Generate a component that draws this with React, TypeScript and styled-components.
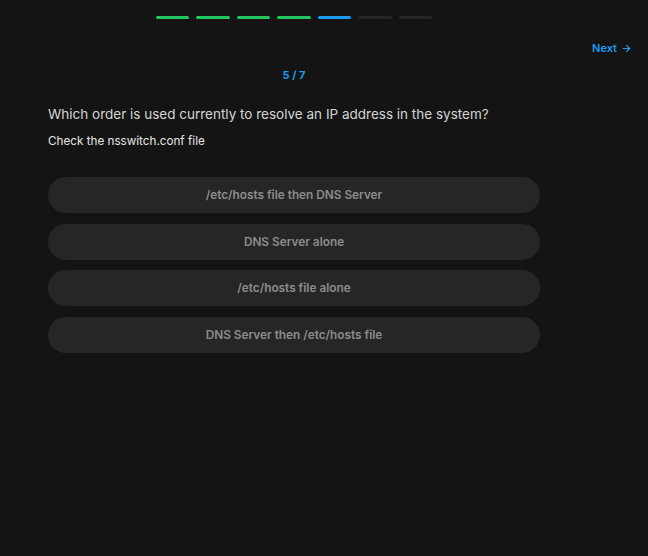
import React from "react";
import styled, { createGlobalStyle } from "styled-components";

const Global = createGlobalStyle`
  html, body { margin: 0; padding: 0; background: #141414; }
  body { font-family: Inter, "Noto Sans", sans-serif; }
  * { box-sizing: border-box; }
`;

const Page = styled.div`
  width: 648px;
  height: 556px;
  background: #141414;
  display: flex;
  flex-direction: column;
`;

const Column = styled.div`
  width: 492px;
  margin-left: 48px;
  display: flex;
  flex-direction: column;
`;

const Progress = styled.div`
  display: flex;
  justify-content: center;
  gap: 7px;
  padding-top: 16px;
  height: 19px;
`;

const Segment = styled.div<{ $state: "done" | "current" | "todo" }>`
  width: 33.5px;
  height: 3px;
  border-radius: 2px;
  background: ${(p) =>
    p.$state === "done" ? "#22c55e" : p.$state === "current" ? "#1d9bf0" : "#262626"};
`;

const TopBar = styled.div`
  display: flex;
  justify-content: flex-end;
  padding: 22px 16px 0 0;
`;

const NextButton = styled.button`
  display: flex;
  align-items: center;
  gap: 4px;
  background: none;
  border: none;
  padding: 0;
  color: #1d9bf0;
  font-family: Inter, sans-serif;
  font-weight: 600;
  font-size: 11px;
  line-height: 14px;
  cursor: pointer;
`;

const Counter = styled.div`
  text-align: center;
  color: #1d9bf0;
  font-weight: 700;
  font-size: 11px;
  line-height: 14px;
  margin-top: 13px;
`;

const Question = styled.h1`
  margin: 22px 0 0;
  color: #d4d4d4;
  font-size: 13.5px;
  font-weight: 400;
  line-height: 20px;
  white-space: nowrap;
`;

const Hint = styled.p`
  margin: 9px 0 0;
  color: #e5e5e5;
  font-size: 11.7px;
  line-height: 16px;
`;

const Options = styled.div`
  margin-top: 28px;
  display: flex;
  flex-direction: column;
  gap: 10.5px;
`;

const Option = styled.button`
  height: 36px;
  border: none;
  border-radius: 18px;
  background: #262626;
  color: #8c8c8c;
  font-family: Inter, sans-serif;
  font-weight: 600;
  font-size: 11.8px;
  cursor: pointer;
`;

const steps: ("done" | "current" | "todo")[] = ["done", "done", "done", "done", "current", "todo", "todo"];
const answers = [
  "/etc/hosts file then DNS Server",
  "DNS Server alone",
  "/etc/hosts file alone",
  "DNS Server then /etc/hosts file",
];

export default function App() {
  return (
    <Page>
      <Global />
      <Column>
        <Progress>
          {steps.map((s, i) => (
            <Segment key={i} $state={s} />
          ))}
        </Progress>
      </Column>
      <TopBar>
        <NextButton>
          Next
          <svg width="11" height="11" viewBox="0 0 24 24" fill="none" stroke="currentColor" strokeWidth="2.4" strokeLinecap="round" strokeLinejoin="round">
            <path d="M5 12h14" />
            <path d="m12 5 7 7-7 7" />
          </svg>
        </NextButton>
      </TopBar>
      <Column>
        <Counter>5 / 7</Counter>
        <Question>Which order is used currently to resolve an IP address in the system?</Question>
        <Hint>Check the nsswitch.conf file</Hint>
        <Options>
          {answers.map((a) => (
            <Option key={a}>{a}</Option>
          ))}
        </Options>
      </Column>
    </Page>
  );
}
